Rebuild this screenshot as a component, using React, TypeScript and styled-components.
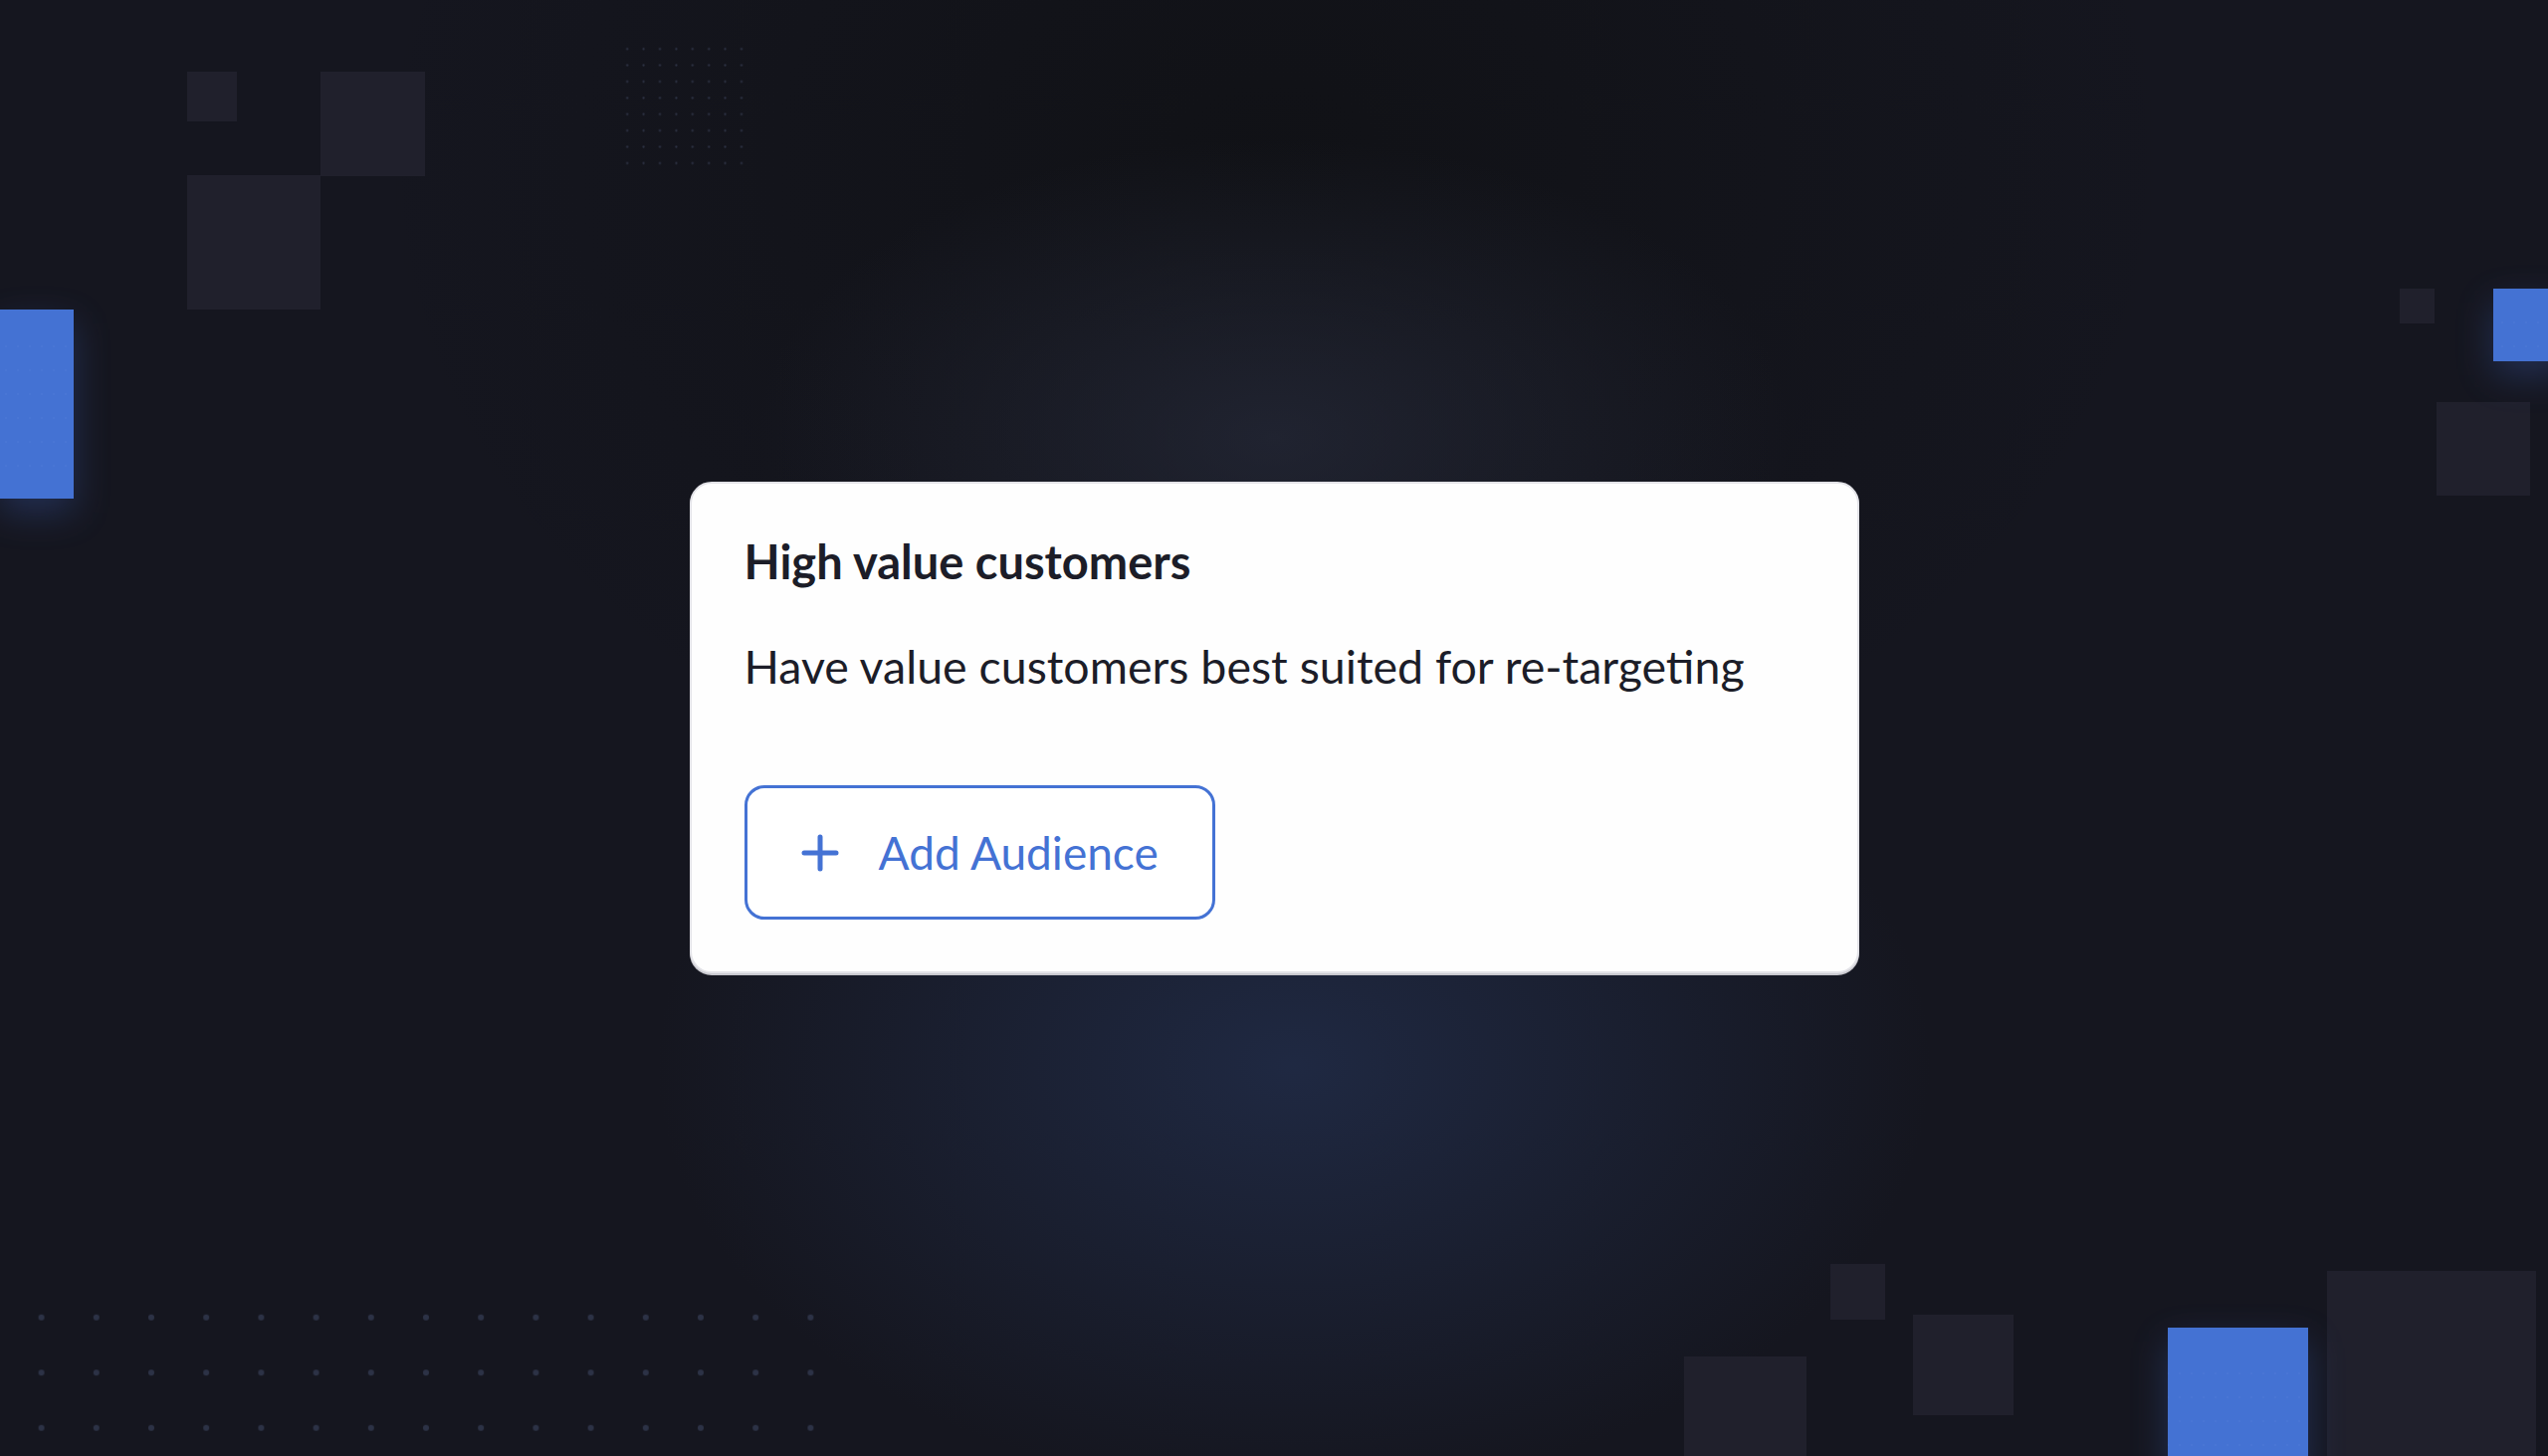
import React from "react";
import styled, { createGlobalStyle } from "styled-components";

const GlobalStyle = createGlobalStyle`
  html, body {
    margin: 0;
    padding: 0;
    width: 100%;
    height: 100%;
    overflow: hidden;
    background: #14151d;
  }
  #root {
    width: 100%;
    height: 100%;
  }
  * {
    box-sizing: border-box;
  }
`;

const Stage = styled.main`
  position: relative;
  width: 100vw;
  height: 100vh;
  display: flex;
  align-items: center;
  justify-content: center;
  overflow: hidden;
  font-family: Lato, "Noto Sans", sans-serif;
  background:
    radial-gradient(ellipse 640px 430px at 1300px 1070px, rgba(34, 46, 76, 0.78), rgba(34, 46, 76, 0) 100%),
    radial-gradient(ellipse 520px 300px at 1280px 440px, rgba(38, 42, 58, 0.7), rgba(38, 42, 58, 0) 100%),
    radial-gradient(ellipse 900px 700px at 1280px 160px, rgba(16, 17, 21, 0.9), rgba(16, 17, 21, 0) 100%),
    #15161f;
`;

/* decorative artwork that sits behind the card */
const Backdrop = styled.svg`
  position: absolute;
  inset: 0;
  width: 100%;
  height: 100%;
  pointer-events: none;
`;

const Card = styled.section`
  position: relative;
  z-index: 1;
  width: 1175px;
  height: 494px;
  margin-top: -1px;
  background: #fefefe;
  border: 2px solid #e3e3e8;
  border-radius: 22px;
  box-shadow: 0 2px 0 #c9c9cf;
  padding: 50px 54px 52px 53px;
  display: flex;
  flex-direction: column;
  align-items: flex-start;
`;

const Title = styled.h2`
  margin: 0;
  font-family: Lato, "Noto Sans", sans-serif;
  font-weight: 700;
  font-size: 47px;
  line-height: 56px;
  color: #1c1d28;
`;

const Description = styled.p`
  margin: 49px 0 0 0;
  font-family: Lato, "Noto Sans", sans-serif;
  font-weight: 400;
  font-size: 46.5px;
  line-height: 56px;
  color: #1c1d28;
`;

const AddButton = styled.button`
  margin-top: auto;
  height: 135px;
  padding: 0 54px;
  display: inline-flex;
  align-items: center;
  gap: 40px;
  background: #ffffff;
  border: 3px solid #4472d4;
  border-radius: 20px;
  color: #4472d4;
  font-family: Lato, "Noto Sans", sans-serif;
  font-weight: 400;
  font-size: 46px;
  cursor: pointer;
`;

const PlusIcon = styled.svg`
  width: 38px;
  height: 38px;
  flex: none;
`;

type Box = [number, number, number, number];

const greyTiles: Box[] = [
  [188, 72, 50, 50],
  [322, 72, 105, 105],
  [188, 176, 134, 135],
  [2411, 290, 35, 35],
  [2448, 404, 94, 94],
  [1692, 1363, 123, 123],
  [1839, 1270, 55, 56],
  [1922, 1321, 101, 101],
  [2338, 1277, 210, 210],
];

const blueTiles: Box[] = [
  [0, 311, 74, 190],
  [2505, 290, 73, 73],
  [2178, 1334, 141, 141],
];

function Decorations() {
  return (
    <Backdrop viewBox="0 0 2560 1463" preserveAspectRatio="none" aria-hidden="true">
      <defs>
        <pattern id="fineDots" width="16.4" height="16.4" patternUnits="userSpaceOnUse" x="622" y="41">
          <circle cx="8.2" cy="8.2" r="1.1" fill="#2d3244" />
        </pattern>
        <pattern id="wideDots" width="55.2" height="55.5" patternUnits="userSpaceOnUse" x="14" y="1296">
          <circle cx="27.6" cy="27.7" r="3" fill="#2c3246" />
        </pattern>
        <pattern id="tileSpeck" width="12" height="24" patternUnits="userSpaceOnUse">
          <circle cx="6" cy="12" r="0.7" fill="#8fb0f0" opacity="0.35" />
        </pattern>
        <filter id="soft" x="-60%" y="-60%" width="220%" height="220%">
          <feGaussianBlur stdDeviation="18" />
        </filter>
      </defs>

      {greyTiles.map(([x, y, w, h]) => (
        <rect key={`g${x}-${y}`} x={x} y={y} width={w} height={h} fill="#20202c" />
      ))}

      <rect x="622" y="41" width="131" height="131" fill="url(#fineDots)" />
      <rect x="14" y="1296" width="828" height="167" fill="url(#wideDots)" />

      {blueTiles.map(([x, y, w, h]) => (
        <g key={`b${x}-${y}`}>
          <rect x={x} y={y + 14} width={w} height={h} fill="#3a5cb0" opacity="0.35" filter="url(#soft)" />
          <rect x={x} y={y} width={w} height={h} fill="#4472d3" />
          <rect x={x} y={y + 30} width={w} height={Math.max(h - 40, 0)} fill="url(#tileSpeck)" opacity="0.5" />
        </g>
      ))}
    </Backdrop>
  );
}

export default function App() {
  return (
    <>
      <GlobalStyle />
      <Stage>
        <Decorations />
        <Card>
          <Title>High value customers</Title>
          <Description>Have value customers best suited for re-targeting</Description>
          <AddButton type="button">
            <PlusIcon viewBox="0 0 38 38" aria-hidden="true">
              <path
                d="M19 3v32M3 19h32"
                stroke="#4472d4"
                strokeWidth="5"
                strokeLinecap="round"
                fill="none"
              />
            </PlusIcon>
            Add Audience
          </AddButton>
        </Card>
      </Stage>
    </>
  );
}
